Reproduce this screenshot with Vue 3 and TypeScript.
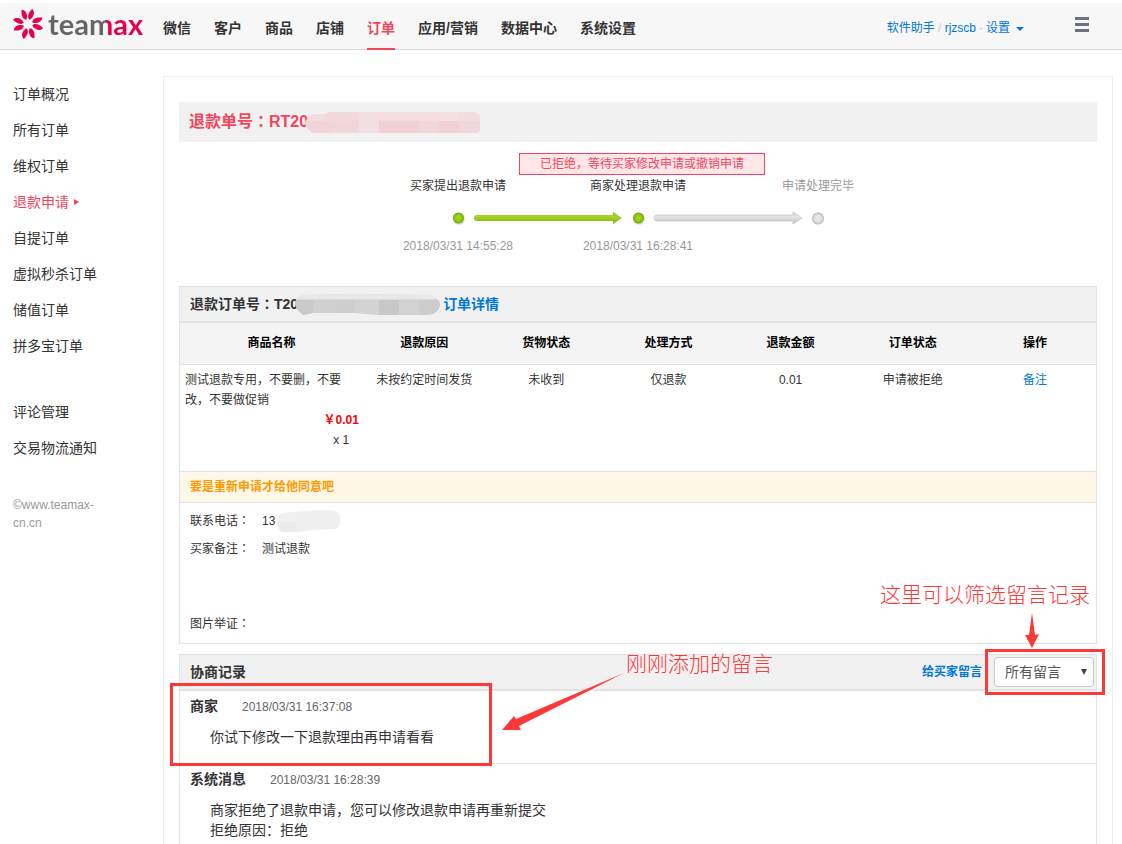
<script setup lang="ts">
import { ref } from 'vue'

interface Block { x: number; y: number; w: number; h: number; fill: string }
interface Entry { who: string; time: string; lines: string[]; marked: boolean }

const nav: string[] = ['微信', '客户', '商品', '店铺', '订单', '应用/营销', '数据中心', '系统设置']
const activeNav = '订单'

const sideGroups: string[][] = [
  ['订单概况', '所有订单', '维权订单', '退款申请', '自提订单', '虚拟秒杀订单', '储值订单', '拼多宝订单'],
  ['评论管理', '交易物流通知'],
]
const activeSide = '退款申请'

const columns: string[] = ['商品名称', '退款原因', '货物状态', '处理方式', '退款金额', '订单状态', '操作']
const cells: string[] = ['未按约定时间发货', '未收到', '仅退款', '0.01', '申请被拒绝']

const numberMask: Block[] = [
  { x: 0, y: 0, w: 175, h: 21, fill: '#f2dce0' },
  { x: 20, y: 0, w: 34, h: 9, fill: '#f1d9dd' },
  { x: 54, y: 0, w: 20, h: 21, fill: '#f2dfe3' },
  { x: 74, y: 0, w: 60, h: 9, fill: '#f3dde0' },
  { x: 134, y: 0, w: 20, h: 9, fill: '#f3e0e3' },
  { x: 0, y: 9, w: 26, h: 12, fill: '#f1d3d8' },
  { x: 26, y: 9, w: 28, h: 11, fill: '#f1d5d9' },
  { x: 74, y: 9, w: 40, h: 12, fill: '#f1d1d6' },
  { x: 114, y: 9, w: 20, h: 12, fill: '#f1d7db' },
  { x: 134, y: 9, w: 20, h: 12, fill: '#f1d1d6' },
  { x: 154, y: 9, w: 21, h: 12, fill: '#f1d7db' },
]
const orderMask: Block[] = [
  { x: 0, y: 0, w: 145, h: 21, fill: '#d9d9d9' },
  { x: 0, y: 0, w: 145, h: 5, fill: '#e8e8e8' },
  { x: 0, y: 6, w: 18, h: 15, fill: '#c9c9c9' },
  { x: 18, y: 6, w: 24, h: 13, fill: '#d0d0d0' },
  { x: 42, y: 6, w: 17, h: 13, fill: '#cecece' },
  { x: 59, y: 6, w: 25, h: 15, fill: '#d3d3d3' },
  { x: 84, y: 6, w: 20, h: 15, fill: '#c8c8c8' },
  { x: 104, y: 6, w: 20, h: 15, fill: '#d2d2d2' },
  { x: 124, y: 6, w: 21, h: 15, fill: '#cccccc' },
]

const entries: Entry[] = [
  { who: '商家', time: '2018/03/31 16:37:08', lines: ['你试下修改一下退款理由再申请看看'], marked: true },
  { who: '系统消息', time: '2018/03/31 16:28:39', lines: ['商家拒绝了退款申请，您可以修改退款申请再重新提交', '拒绝原因：拒绝'], marked: false },
]

const filter = ref('所有留言')
const petals: number[] = [20, 70, 110, 160, 200, 250, 290, 340]
</script>

<template>
  <div class="page">
    <header class="topbar">
      <a href="#" class="logo" aria-label="teamax">
        <svg width="30" height="30" viewBox="-15 -15 30 30" aria-hidden="true">
          <path v-for="a in petals" :key="a" :transform="`rotate(${a})`" d="M4.500 0 C6 -3.400 10 -3.800 15.500 -1.200 C14.500 2.200 9 3.800 4.500 0Z" fill="#e6004f" />
        </svg>
        <span class="word">teamax</span>
      </a>
      <nav class="nav">
        <a v-for="n in nav" :key="n" href="#" :class="{ on: n === activeNav }">{{ n }}</a>
      </nav>
      <div class="account">
        <a href="#">软件助手</a><i>/</i><a href="#">rjzscb</a><i>-</i><a href="#">设置<span class="caret"></span></a>
      </div>
      <button class="menu" type="button" aria-label="菜单"><span></span><span></span><span></span></button>
    </header>

    <div class="body">
      <aside class="side">
        <ul v-for="(g, i) in sideGroups" :key="i">
          <li v-for="s in g" :key="s"><a href="#" :class="{ on: s === activeSide }">{{ s }}</a></li>
        </ul>
        <p class="copy">©www.teamax-<br>cn.cn</p>
      </aside>

      <main class="main">
        <h1 class="title">
          <span>退款单号<span class="mark">：</span>RT20</span><svg class="mask" width="175" height="21" aria-hidden="true">
            <defs><clipPath id="m1"><path d="M8 2 L20 2 L24 0 L165 0 Q175 0 175 5 V17 Q175 21 170 21 H8 Q3 18 0 12 Q1 5 8 2Z" /></clipPath></defs>
            <g clip-path="url(#m1)"><rect v-for="(b, i) in numberMask" :key="i" :x="b.x" :y="b.y" :width="b.w" :height="b.h" :fill="b.fill" /></g>
          </svg>
        </h1>

        <section class="steps">
          <div class="tip">已拒绝，等待买家修改申请或撤销申请</div>
          <span>买家提出退款申请</span>
          <span>商家处理退款申请</span>
          <span class="todo">申请处理完毕</span>
          <svg class="track" width="540" height="16" viewBox="0 0 540 16" aria-hidden="true">
            <defs>
              <linearGradient id="gl" x1="0" y1="0" x2="0" y2="1"><stop offset="0" stop-color="#7fae12" /><stop offset=".35" stop-color="#a9d62c" /><stop offset="1" stop-color="#7fb30c" /></linearGradient>
              <linearGradient id="sl" x1="0" y1="0" x2="0" y2="1"><stop offset="0" stop-color="#c4c4c4" /><stop offset=".35" stop-color="#e6e6e6" /><stop offset="1" stop-color="#c4c4c4" /></linearGradient>
              <radialGradient id="gd"><stop offset="0" stop-color="#a5e01c" /><stop offset=".65" stop-color="#8dc70f" /><stop offset="1" stop-color="#6d9f0b" /></radialGradient>
              <radialGradient id="sd"><stop offset="0" stop-color="#ececec" /><stop offset=".65" stop-color="#dedede" /><stop offset="1" stop-color="#b0b0b0" /></radialGradient>
            </defs>
            <circle cx="91" cy="9" r="6" fill="#e4e4e4" /><circle cx="90.500" cy="8" r="5.500" fill="url(#gd)" />
            <path d="M109 5 H245 V2 L254 8 L245 14 V11 H109 Q106 11 106 8 Q106 5 109 5Z" fill="url(#gl)" />
            <circle cx="271" cy="9" r="6" fill="#e4e4e4" /><circle cx="270.500" cy="8" r="5.500" fill="url(#gd)" />
            <path d="M289 5 H425 V2 L434 8 L425 14 V11 H289 Q286 11 286 8 Q286 5 289 5Z" fill="url(#sl)" stroke="#bcbcbc" stroke-width=".6" />
            <circle cx="450" cy="8.500" r="6" fill="url(#sd)" />
          </svg>
          <time class="todo">2018/03/31 14:55:28</time>
          <time class="todo">2018/03/31 16:28:41</time>
        </section>

        <section class="box order">
          <h2 class="bar">
            <span>退款订单号<span class="mark">：</span>T20</span><svg class="mask" width="145" height="21" aria-hidden="true">
              <defs><clipPath id="m2"><path d="M10 1 L60 0 L130 1 Q145 2 145 12 Q142 21 130 21 H84 L60 19 H18 L8 21 Q0 15 0 8 Q2 2 10 1Z" /></clipPath></defs>
              <g clip-path="url(#m2)"><rect v-for="(b, i) in orderMask" :key="i" :x="b.x" :y="b.y" :width="b.w" :height="b.h" :fill="b.fill" /></g>
            </svg><a href="#">订单详情</a>
          </h2>
          <table>
            <thead>
              <tr><th v-for="c in columns" :key="c" scope="col">{{ c }}</th></tr>
            </thead>
            <tbody>
              <tr class="goods">
                <td class="name">测试退款专用，不要删，不要改，不要做促销
                  <div class="price"><b>￥0.01</b><span>x 1</span></div>
                </td>
                <td v-for="c in cells" :key="c">{{ c }}</td>
                <td><a href="#">备注</a></td>
              </tr>
              <tr><td class="note" colspan="7">要是重新申请才给他同意吧</td></tr>
            </tbody>
          </table>
          <dl class="info">
            <div>
              <dt>联系电话<span class="mark">：</span></dt>
              <dd>13<svg class="mask phone" width="64" height="24" aria-hidden="true">
                <path d="M6 4 L40 1 H56 Q64 2 64 9 V15 Q63 20 58 20 L38 21 L22 23 H6 Q1 20 0 13 Q1 7 6 4Z" fill="#f0f0f0" />
                <path d="M2 13 H20 V23 H6 Q2 20 2 13Z" fill="#ebebeb" />
              </svg></dd>
            </div>
            <div><dt>买家备注<span class="mark">：</span></dt><dd>测试退款</dd></div>
            <div class="proof"><dt>图片举证<span class="mark">：</span></dt><dd></dd></div>
          </dl>
        </section>

        <section class="box log">
          <div class="bar">
            <h2>协商记录</h2>
            <a href="#" class="reply">给买家留言</a>
            <div class="filter">
              <select v-model="filter" aria-label="留言筛选">
                <option>所有留言</option>
                <option>买家留言</option>
                <option>商家留言</option>
              </select>
              <svg class="down" width="8" height="8" aria-hidden="true"><path d="M1 1H7L4 7Z" fill="#444" /></svg>
              <div class="frame"></div>
              <div class="hint top">这里可以筛选留言记录</div>
              <svg class="arrow-down" width="14" height="36" aria-hidden="true"><path d="M7 0 L10 22 L14 21 L7 35 L0 22 L4 22Z" fill="#fd3838" /></svg>
            </div>
          </div>
          <article v-for="e in entries" :key="e.time" class="entry" :class="{ marked: e.marked }">
            <template v-if="e.marked">
              <div class="frame"></div>
              <svg class="arrow-left" width="124" height="60" aria-hidden="true"><path d="M122 1 L17 54 L19 58 L0 58 L12 44 L14 47Z" fill="#fd3838" /></svg>
              <div class="hint added">刚刚添加的留言</div>
            </template>
            <h3>{{ e.who }}<time>{{ e.time }}</time></h3>
            <p v-for="l in e.lines" :key="l">{{ l }}</p>
          </article>
        </section>
      </main>
    </div>
  </div>
</template>

<style>
body { margin: 0; background: #fff; }
</style>

<style scoped>
* { box-sizing: border-box; }
.page {
  height: 100vh;
  overflow: hidden;
  padding-top: 3px;
  font: 12px/20px "Liberation Sans", "Noto Sans CJK SC", sans-serif;
  color: #333;
}
.mark { font-family: "Liberation Sans", "Noto Sans CJK TC", sans-serif; }
a { color: #07d; text-decoration: none; }
h1, h2, h3, p, ul, dl, dd { margin: 0; padding: 0; }
li { list-style: none; }

.topbar {
  display: flex;
  height: 47px;
  padding: 0 33px 0 13px;
  background: #f7f7f7;
  border-bottom: 1px solid #d9d9d9;
}
.logo { display: flex; align-items: center; width: 127px; height: 42px; margin-right: 23px; gap: 5px; }
.logo svg { flex: none; }
.word {
  font: bold 29px/40px Lato, sans-serif;
  color: transparent;
  background: linear-gradient(90deg, #666 60%, #e6004f 60%);
  -webkit-background-clip: text;
  background-clip: text;
}
.nav { display: flex; gap: 23px; }
.nav a {
  height: 47px;
  padding-top: 15px;
  font-size: 14px;
  font-weight: bold;
  color: #333;
  white-space: nowrap;
}
.nav a.on { color: #f4455c; border-bottom: 2px solid #f4455c; }
.account { display: flex; margin-left: auto; padding-top: 15px; }
.account i { width: 10px; font-style: normal; text-align: center; color: #ccc; }
.caret {
  display: inline-block;
  margin-left: 6px;
  vertical-align: middle;
  border: 4px solid transparent;
  border-top-color: #07d;
  border-bottom: 0;
}
.menu {
  display: flex;
  flex-direction: column;
  gap: 3px;
  width: 14px;
  margin: 14px 0 0 51px;
  padding: 0;
  border: 0;
  background: none;
}
.menu span { width: 14px; height: 3px; background: #6a7183; }

.body { display: flex; padding-top: 26px; }
.side { flex: none; width: 163px; padding-left: 13px; }
.side ul { margin-bottom: 30px; }
.side li { height: 36px; font-size: 14px; line-height: 36px; }
.side a { color: #333; }
.side a.on { color: #f4455c; }
.side a.on::after {
  content: "";
  display: inline-block;
  margin-left: 5px;
  vertical-align: 2px;
  border: 3px solid transparent;
  border-left: 5px solid #f4455c;
  border-right: 0;
}
.copy { line-height: 18px; color: #999; }

.main {
  flex: 1;
  min-width: 0;
  margin-right: 9px;
  padding: 25px 15px 15px;
  border: 1px solid #eee;
}
.title {
  display: flex;
  align-items: center;
  height: 40px;
  padding-left: 10px;
  background: #f1f1f1;
  font-size: 16px;
  color: #f4455c;
}
.mask { flex: none; margin-left: -3px; }
.phone { margin-left: 1px; }

.steps {
  position: relative;
  display: grid;
  grid-template-columns: repeat(3, 180px);
  grid-template-rows: 24px 16px 20px;
  row-gap: 10px;
  justify-content: center;
  width: 540px;
  margin: 0 auto;
  padding: 34px 0 30px;
  text-align: center;
}
.track { grid-column: 1 / 4; }
.todo { color: #999; }
.tip {
  position: absolute;
  top: 11px;
  left: 151px;
  width: 246px;
  border: 1px solid #f4455c;
  background: #ffe7e9;
  color: #f4455c;
}

.box { border: 1px solid #e2e2e2; }
.bar {
  display: flex;
  align-items: center;
  height: 36px;
  padding-left: 10px;
  border-bottom: 2px solid #e2e2e2;
  background: #f1f1f1;
  font-size: 14px;
}
.order .bar a { margin-left: 3px; }
table { width: 100%; table-layout: fixed; border-collapse: collapse; }
th {
  height: 41px;
  padding: 0;
  border-bottom: 1px solid #e2e2e2;
  background: #f4f4f4;
  color: #000;
}
th:first-child { width: 20%; }
td { padding: 5px; text-align: center; vertical-align: top; }
.goods { height: 107px; }
.name { text-align: left; }
.price { display: flex; flex-direction: column; width: 34px; margin-left: auto; text-align: center; white-space: nowrap; }
.price b { display: flex; justify-content: center; color: #f00; }
td.note {
  padding-left: 10px;
  border: solid #e2e2e2;
  border-width: 1px 0;
  background: #fff8e9;
  color: #f90;
  font-weight: bold;
  text-align: left;
}
.info { padding: 4px 10px 5px; }
.info > div { display: flex; align-items: center; height: 28px; }
.info dt { width: 72px; }
.info dd { display: flex; align-items: center; }
.info .proof { margin-top: 47px; }

.log { margin-top: 10px; }
.log .bar { padding-right: 2px; }
.log h2 { margin-right: auto; font-size: 14px; }
.reply { margin-right: 12px; font-size: 12px; font-weight: bold; }
.filter { position: relative; width: 100px; height: 30px; }
select {
  width: 100%;
  height: 30px;
  padding: 0 20px 0 10px;
  appearance: none;
  border: 1px solid #ccc;
  border-radius: 4px;
  background: #fff;
  font: inherit;
  font-size: 14px;
  color: #555;
}
.down { position: absolute; top: 11px; right: 6px; }
.frame { position: absolute; border: 3px solid #fd3838; pointer-events: none; }
.filter .frame { inset: -8px -11px -8px -9px; }
.hint { position: absolute; font-size: 21px; font-weight: 300; line-height: 30px; color: #fd3838; white-space: nowrap; }
.hint.top { top: -77px; right: 4px; }
.arrow-down { position: absolute; top: -44px; left: 31px; }

.entry { position: relative; padding: 5px 10px 16px; }
.entry + .entry { border-top: 1px solid #e2e2e2; }
.entry.marked { z-index: 1; }
.entry .frame { top: -8px; left: -10px; width: 322px; height: 83px; }
.arrow-left { position: absolute; top: -19px; left: 322px; }
.hint.added { top: -42px; left: 446px; }
h3 { margin-bottom: 10px; font-size: 14px; line-height: 20px; }
h3 time { margin-left: 24px; font-size: 12px; font-weight: normal; color: #666; }
.entry p { padding-left: 20px; font-size: 14px; }
</style>
